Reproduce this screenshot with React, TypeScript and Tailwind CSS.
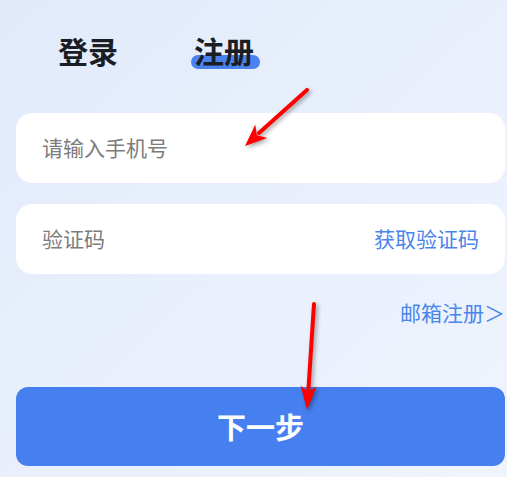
import { useState } from 'react';

const Arrows = () => (
  <svg
    className="absolute inset-0 pointer-events-none drop-shadow-[2px_2px_2px_rgba(0,0,0,0.35)]"
    width="507"
    height="477"
    viewBox="0 0 507 477"
  >
    {/* arrow pointing at the phone field */}
    <line x1="307" y1="90" x2="259" y2="133" stroke="#ff0000" strokeWidth="4" strokeLinecap="round" />
    <polygon points="245,146 267.3,138 256.9,135.3 255.3,124.6" fill="#ff0000" />
    {/* arrow pointing at the button */}
    <line x1="314" y1="304" x2="308.4" y2="390" stroke="#ff0000" strokeWidth="4" strokeLinecap="round" />
    <polygon points="307,410 316.6,386.5 308.2,392 300.6,385.5" fill="#ff0000" />
  </svg>
);

export default function App() {
  const [tab, setTab] = useState<'login' | 'register'>('register');

  return (
    <div
      className="relative w-[507px] h-[477px] overflow-hidden bg-gradient-to-br from-[#e1eafb] via-[#e9f0fc] to-[#eff4fd]"
      style={{ fontFamily: '"Noto Sans CJK SC", "Noto Sans", sans-serif' }}
    >
      <div className="flex flex-col pl-4 pr-[2px]">
        {/* Tabs */}
        <div className="flex items-start mt-[35px] pl-[42px] gap-[76px] h-[30px]">
          <button
            onClick={() => setTab('login')}
            className="relative text-[30px] leading-none font-bold text-[#1b1d25]"
          >
            {tab === 'login' && (
              <span className="absolute left-[-3px] top-[20px] w-[69px] h-[14px] rounded-full bg-[#4a82ef]" />
            )}
            <span className="relative">登录</span>
          </button>
          <button
            onClick={() => setTab('register')}
            className="relative text-[30px] leading-none font-bold text-[#1b1d25]"
          >
            {tab === 'register' && (
              <span className="absolute left-[-3px] top-[20px] w-[69px] h-[14px] rounded-full bg-[#4a82ef]" />
            )}
            <span className="relative">注册</span>
          </button>
        </div>

        {/* Phone */}
        <div className="mt-[48px] h-[70px] rounded-[16px] bg-white flex items-center px-[26px]">
          <input
            className="w-full bg-transparent outline-none text-[21px] text-[#333] placeholder:text-[#7c7c7c]"
            placeholder="请输入手机号"
          />
        </div>

        {/* Code */}
        <div className="mt-[21px] h-[70px] rounded-[16px] bg-white flex items-center pl-[26px] pr-[26px]">
          <input
            className="flex-1 min-w-0 bg-transparent outline-none text-[21px] text-[#333] placeholder:text-[#7c7c7c]"
            placeholder="验证码"
          />
          <span className="text-[21px] text-[#4a86ea] whitespace-nowrap">获取验证码</span>
        </div>

        {/* Email register */}
        <div className="mt-[28px] flex justify-end">
          <span className="text-[21px] leading-none text-[#4a86ea] whitespace-nowrap">邮箱注册＞</span>
        </div>

        {/* Next */}
        <button className="mt-[64px] h-[79px] rounded-[12px] bg-[#4680f0] text-white text-[29px] font-bold">
          下一步
        </button>
      </div>

      <Arrows />
    </div>
  );
}
